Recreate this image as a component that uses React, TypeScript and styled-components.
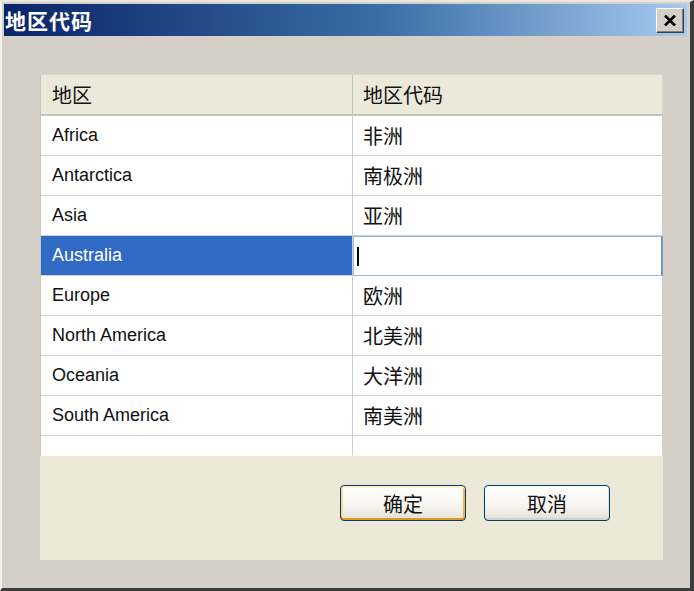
import styled, { createGlobalStyle } from 'styled-components';

const GlobalStyle = createGlobalStyle`
  html, body {
    margin: 0;
    padding: 0;
    background: #d4d0c8;
  }
`;

type Region = { name: string; code: string };

const regions: Region[] = [
  { name: 'Africa', code: '非洲' },
  { name: 'Antarctica', code: '南极洲' },
  { name: 'Asia', code: '亚洲' },
  { name: 'Australia', code: '' },
  { name: 'Europe', code: '欧洲' },
  { name: 'North America', code: '北美洲' },
  { name: 'Oceania', code: '大洋洲' },
  { name: 'South America', code: '南美洲' },
];

const EDITING = 3;

const App = () => (
  <>
    <GlobalStyle />
    <Window>
      <TitleBar>
        <Title>地区代码</Title>
        <CloseButton aria-label="close">
          <svg width="12" height="11" viewBox="0 0 12 11">
            <path d="M1 0.5 L11 10.5 M11 0.5 L1 10.5" stroke="#000" strokeWidth="2.6" />
          </svg>
        </CloseButton>
      </TitleBar>
      <Body>
        <Panel>
          <Grid>
            <HeaderCell>地区</HeaderCell>
            <HeaderCell $last>地区代码</HeaderCell>
            {regions.map((r, i) => (
              <Row key={r.name}>
                <Cell $selected={i === EDITING}>{r.name}</Cell>
                {i === EDITING ? (
                  <EditCell>
                    <Caret />
                  </EditCell>
                ) : (
                  <Cell $cjk $last>
                    {r.code}
                  </Cell>
                )}
              </Row>
            ))}
            <Row>
              <Cell $short />
              <Cell $short $last />
            </Row>
          </Grid>
          <Buttons>
            <Button $default>确定</Button>
            <Button>取消</Button>
          </Buttons>
        </Panel>
      </Body>
    </Window>
  </>
);

export default App;

const Window = styled.div`
  box-sizing: border-box;
  width: 694px;
  height: 591px;
  background: #d4d0c8;
  border-top: 2px solid #e9e7e2;
  border-left: 2px solid #f4f3ef;
  border-right: 4px solid #3c3c3c;
  border-bottom: 3px solid #3c3c3c;
  padding: 2px 0 0 2px;
  display: flex;
  flex-direction: column;
  font-family: 'Liberation Sans', 'Noto Sans CJK SC', sans-serif;
`;

const TitleBar = styled.div`
  height: 32px;
  margin-right: 3px;
  background: linear-gradient(to right, #0a246a 0%, #3a6ea5 55%, #a6caf0 100%);
  display: flex;
  align-items: center;
  justify-content: space-between;
  padding: 0 3px 0 1px;
`;

const Title = styled.span`
  color: #fff;
  font-family: 'Noto Sans CJK SC', sans-serif;
  font-weight: 700;
  font-size: 21px;
  letter-spacing: 1px;
  line-height: 1;
`;

const CloseButton = styled.div`
  box-sizing: border-box;
  width: 28px;
  height: 25px;
  background: #d4d0c8;
  border-top: 1px solid #ffffff;
  border-left: 1px solid #ffffff;
  border-right: 1px solid #404040;
  border-bottom: 1px solid #404040;
  box-shadow: inset -1px -1px 0 #808080;
  display: flex;
  align-items: center;
  justify-content: center;
`;

const Body = styled.div`
  flex: 1;
  padding: 38px 27px 28px 36px;
  display: flex;
`;

const Panel = styled.div`
  flex: 1;
  background: #ece9d8;
  display: flex;
  flex-direction: column;
`;

const Grid = styled.div`
  display: grid;
  grid-template-columns: 312px 1fr;
  border-left: 1px solid #c9c6b8;
  border-top: 1px solid #dedbcd;
`;

const Row = styled.div`
  display: contents;
`;

const HeaderCell = styled.div<{ $last?: boolean }>`
  box-sizing: border-box;
  height: 41px;
  background: #ebe9da;
  border-bottom: 2px solid #c5c3bd;
  border-right: 1px solid ${({ $last }) => ($last ? '#d8d5c8' : '#c5c3bd')};
  padding-left: ${({ $last }) => ($last ? '10px' : '11px')};
  display: flex;
  align-items: center;
  font-family: 'Noto Sans CJK SC', sans-serif;
  font-size: 20px;
  color: #111;
`;

const Cell = styled.div<{ $last?: boolean; $cjk?: boolean; $selected?: boolean; $short?: boolean }>`
  box-sizing: border-box;
  height: ${({ $short }) => ($short ? '20px' : '40px')};
  background: ${({ $selected }) => ($selected ? '#316ac5' : '#ffffff')};
  color: ${({ $selected }) => ($selected ? '#ffffff' : '#111111')};
  border-bottom: 1px solid ${({ $short }) => ($short ? 'transparent' : '#cfcfcf')};
  border-right: 1px solid #cfcfcf;
  padding-left: ${({ $last }) => ($last ? '10px' : '11px')};
  display: flex;
  align-items: center;
  font-family: ${({ $cjk }) =>
    $cjk ? "'Noto Sans CJK SC', sans-serif" : "'Liberation Sans', sans-serif"};
  font-size: ${({ $cjk }) => ($cjk ? '20px' : '18px')};
  white-space: nowrap;
`;

const EditCell = styled.div`
  box-sizing: border-box;
  height: 40px;
  background: #ffffff;
  border: 1px solid #9fb6d9;
  border-right: 2px solid #7a98c8;
  padding-left: 3px;
  display: flex;
  align-items: center;
`;

const Caret = styled.span`
  width: 2px;
  height: 19px;
  background: #000;
`;

const Buttons = styled.div`
  display: flex;
  gap: 18px;
  padding: 29px 0 0 300px;
`;

const Button = styled.div<{ $default?: boolean }>`
  box-sizing: border-box;
  width: 126px;
  height: 36px;
  border: 1px solid #003c74;
  border-radius: 4px;
  background: linear-gradient(to bottom, #ffffff 0%, #f6f5f0 60%, #e3e0d4 100%);
  box-shadow: ${({ $default }) =>
    $default
      ? 'inset 0 2px 0 #fff0cf, inset 0 -2px 0 #e5971f, inset 2px 0 0 #fbd88b, inset -2px 0 0 #f8b33d'
      : 'inset 0 -2px 0 #d6d0c5, inset -1px 0 0 #e4e1d8'};
  display: flex;
  align-items: center;
  justify-content: center;
  font-family: 'Noto Sans CJK SC', sans-serif;
  font-size: 20px;
  color: #111;
`;
